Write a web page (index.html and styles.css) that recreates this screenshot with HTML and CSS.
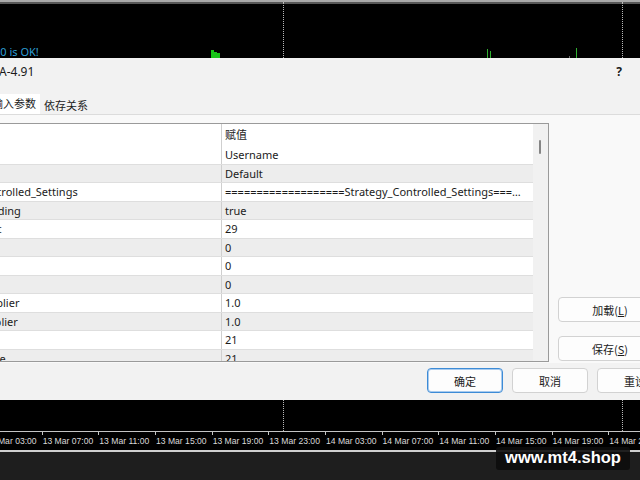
FILE: index.html
```html
<!DOCTYPE html>
<html>

<head>
    <meta charset="UTF-8">
    <title>EA 输入参数</title>
    <link rel="stylesheet" href="styles.css">
</head>

<body>
    <!-- chart strip above the dialog -->
    <div class="chart chart-top">
        <div class="vline vline-a"></div>
        <div class="vline vline-b"></div>
        <span class="msg">20 is OK!</span>
        <div class="bar" style="left:211px;height:8px"></div>
        <div class="bar" style="left:214px;height:6px"></div>
        <div class="bar" style="left:217px;height:5px"></div>
        <div class="bar thin" style="left:487px;height:9px"></div>
        <div class="bar thin" style="left:490px;height:7px"></div>
        <div class="bar thin grey" style="left:569px;height:2px"></div>
        <div class="bar thin" style="left:576px;height:10px"></div>
    </div>

    <div class="dialog">
        <div class="titlebar">
            <span class="title">A-4.91</span>
            <span class="help">?</span>
        </div>

        <div class="tabs">
            <div class="tab active">输入参数</div>
            <div class="tab">依存关系</div>
        </div>

        <div class="page">
            <div class="grid-box">
                <div class="grid">
                    <div class="row head">
                        <div class="cell name">变量</div>
                        <div class="cell">赋值</div>
                    </div>
                    <div class="row">
                        <div class="cell name">User_Name</div>
                        <div class="cell">Username</div>
                    </div>
                    <div class="row">
                        <div class="cell name">Preset</div>
                        <div class="cell">Default</div>
                    </div>
                    <div class="row">
                        <div class="cell name">Strategy_Controlled_Settings</div>
                        <div class="cell">===================Strategy_Controlled_Settings===================</div>
                    </div>
                    <div class="row">
                        <div class="cell name">UseNews_Trading</div>
                        <div class="cell">true</div>
                    </div>
                    <div class="row">
                        <div class="cell name">Min_Pip_Point</div>
                        <div class="cell">29</div>
                    </div>
                    <div class="row">
                        <div class="cell name">Magic</div>
                        <div class="cell">0</div>
                    </div>
                    <div class="row">
                        <div class="cell name">Slippage</div>
                        <div class="cell">0</div>
                    </div>
                    <div class="row">
                        <div class="cell name">Stop_Loss</div>
                        <div class="cell">0</div>
                    </div>
                    <div class="row">
                        <div class="cell name">BuyLot_Multiplier</div>
                        <div class="cell">1.0</div>
                    </div>
                    <div class="row">
                        <div class="cell name">SellLot_Multiplier</div>
                        <div class="cell">1.0</div>
                    </div>
                    <div class="row">
                        <div class="cell name">MA_Period</div>
                        <div class="cell">21</div>
                    </div>
                    <div class="row">
                        <div class="cell name">Retrace_Range</div>
                        <div class="cell">21</div>
                    </div>
                </div>
                <div class="scrollbar"><div class="thumb"></div></div>
            </div>

            <div class="side">
                <button class="btn wide">加载(<u>L</u>)</button>
                <button class="btn wide">保存(<u>S</u>)</button>
            </div>
        </div>

        <div class="footer">
            <button class="btn default">确定</button>
            <button class="btn">取消</button>
            <button class="btn">重设</button>
        </div>
    </div>

    <!-- chart strip below the dialog, with the time scale -->
    <div class="chart chart-bottom">
        <div class="plot">
            <div class="vline vline-a"></div>
            <div class="vline vline-b"></div>
        </div>
        <div class="axis">
            <span>13 Mar 03:00</span>
            <span>13 Mar 07:00</span>
            <span>13 Mar 11:00</span>
            <span>13 Mar 15:00</span>
            <span>13 Mar 19:00</span>
            <span>13 Mar 23:00</span>
            <span>14 Mar 03:00</span>
            <span>14 Mar 07:00</span>
            <span>14 Mar 11:00</span>
            <span>14 Mar 15:00</span>
            <span>14 Mar 19:00</span>
            <span>14 Mar 23:00</span>
        </div>
    </div>
    <div class="statusbar"></div>

    <div class="watermark">www.mt4.shop</div>
</body>

</html>
```

FILE: styles.css
```css
* {
    box-sizing: border-box;
}

body {
    margin: 0;
    width: 640px;
    height: 480px;
    overflow: hidden;
    position: relative;
    background: #1e1e1e;
    font-family: "Noto Sans", "Noto Sans CJK SC", sans-serif;
    font-size: 11px;
    color: #1b1b1b;
}

/* chart */
.chart {
    position: relative;
    background: #000;
    overflow: hidden;
}

.chart-top {
    height: 58px;
    border-top: 2px solid #a9a9a9;
    box-shadow: inset 0 2px 0 #575757;
}

.vline {
    position: absolute;
    top: 0;
    bottom: 0;
    border-left: 1px dotted #b8b8b8;
}

.vline-a {
    left: 283px;
}

.vline-b {
    left: 622px;
}

.msg {
    position: absolute;
    left: -6px;
    top: 42px;
    color: #2d9fd6;
    font-size: 11px;
}

.bar {
    position: absolute;
    bottom: 0;
    width: 3px;
    background: #19c419;
}

.bar.thin {
    width: 1px;
    background: #2fae2f;
}

.bar.grey {
    background: #6c6c6c;
}

.chart-bottom {
    height: 52px;
    border-bottom: 2px solid #cfcfcf;
}

.plot {
    position: relative;
    height: 31px;
}

.axis {
    display: flex;
    margin-left: -15px;
    height: 19px;
    border-top: 1px solid #c4c4c4;
}

.axis span {
    flex: 0 0 56.67px;
    position: relative;
    padding-left: 1px;
    font-family: "Liberation Sans", sans-serif;
    font-size: 8.6px;
    line-height: 18px;
    color: #dadada;
    white-space: nowrap;
}

.axis span::before {
    content: "";
    position: absolute;
    left: 0;
    top: 0;
    height: 3px;
    border-left: 1px solid #c4c4c4;
}

.statusbar {
    height: 30px;
    background: #1e1e1e;
}

.watermark {
    position: absolute;
    left: 496px;
    top: 447px;
    width: 134px;
    height: 23px;
    border-radius: 3px;
    background: rgba(12, 12, 12, 0.9);
    color: #fff;
    font-family: "Liberation Sans", sans-serif;
    font-weight: bold;
    font-size: 16.5px;
    line-height: 21px;
    text-align: center;
}

/* dialog */
.dialog {
    height: 342px;
    background: #f2f2f2;
    display: flex;
    flex-direction: column;
}

.titlebar {
    height: 27px;
    display: flex;
    align-items: center;
    justify-content: space-between;
    padding-right: 18px;
    font-size: 12px;
}

.title {
    margin-left: -1px;
}

.help {
    font-weight: bold;
    font-size: 12px;
}

.tabs {
    height: 30px;
    display: flex;
    align-items: flex-end;
    margin-left: -8px;
    border-bottom: 1px solid #dcdcdc;
    font-family: "Noto Sans CJK SC", sans-serif;
}

.tab {
    height: 18px;
    line-height: 18px;
    padding: 0 4px;
}

.tab.active {
    height: 20px;
    line-height: 18px;
    background: #fff;
    margin-left: -4px;
}

.page {
    height: 248px;
    display: flex;
    gap: 9px;
    padding: 8px 0 1px;
    background: #f9f9f9;
}

.grid-box {
    flex: 0 0 626px;
    margin-left: -77px;
    display: flex;
    border: 1px solid #9a9a9a;
    background: #fff;
    overflow: hidden;
}

.grid {
    flex: 1;
    min-width: 0;
}

.row {
    display: flex;
    height: 18.5px;
    line-height: 18px;
    border-bottom: 1px solid #dedede;
    white-space: nowrap;
}

.row:nth-child(odd) {
    background: #ededed;
}

.row.head {
    height: 22px;
    line-height: 21px;
    border-bottom: none;
    background: #fff;
    font-family: "Noto Sans CJK SC", sans-serif;
}

.cell {
    flex: 1;
    min-width: 0;
    padding: 0 8px 0 3px;
    overflow: hidden;
    text-overflow: ellipsis;
}

.cell.name {
    flex: 0 0 298px;
    padding-left: 5px;
    border-right: 1px solid #cfcfcf;
    text-overflow: clip;
}

.scrollbar {
    flex: 0 0 15px;
    background: #f1f1f1;
    padding: 16px 0 0 6px;
}

.thumb {
    width: 2px;
    height: 14px;
    border-radius: 1px;
    background: #858585;
}

.side {
    display: flex;
    flex-direction: column;
    justify-content: flex-end;
    gap: 14px;
    padding-bottom: 1px;
}

.btn {
    width: 76px;
    height: 25px;
    padding: 0;
    border: 1px solid #d2d2d2;
    border-radius: 4px;
    background: #fdfdfd;
    font-family: "Noto Sans CJK SC", sans-serif;
    font-size: 11px;
    color: #1b1b1b;
}

.btn.wide {
    width: 104px;
}

.btn u {
    text-underline-offset: 1px;
}

.btn.default {
    border-color: #3d8bd6;
    box-shadow: inset 0 0 0 1px #a9cbee;
}

.footer {
    flex: 1;
    display: flex;
    gap: 9px;
    padding: 5px 0 0 427px;
}

.footer .btn {
    flex: 0 0 76px;
}
```
